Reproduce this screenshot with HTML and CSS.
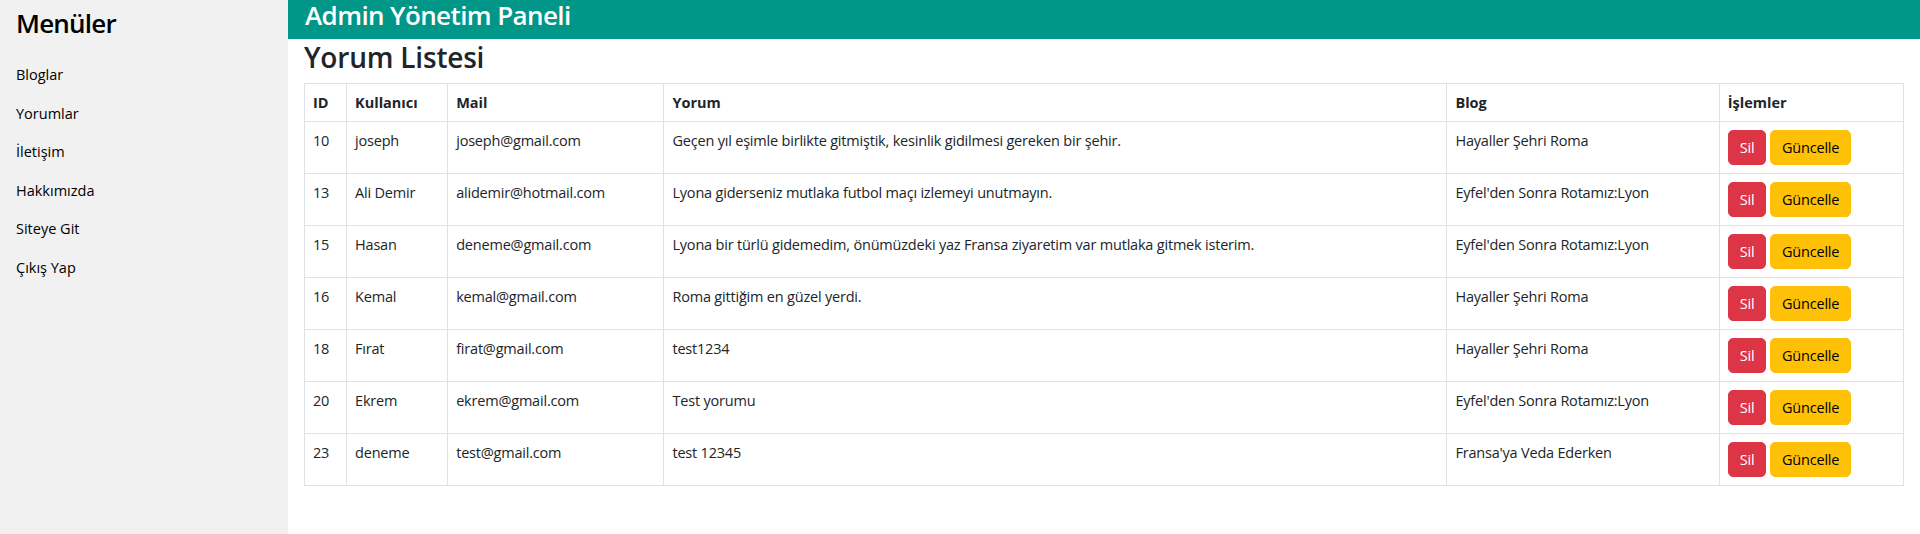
FILE: index.html
```html
<!DOCTYPE html>
<html lang="tr">
<head>
<meta charset="utf-8">
<title>Admin Yönetim Paneli</title>
<link rel="stylesheet" href="styles.css">
</head>
<body>
<div class="layout">
  <aside class="sidebar">
    <h3 class="sidebar-title">Menüler</h3>
    <nav class="menu">
      <a class="menu-item" href="#">Bloglar</a>
      <a class="menu-item" href="#">Yorumlar</a>
      <a class="menu-item" href="#">İletişim</a>
      <a class="menu-item" href="#">Hakkımızda</a>
      <a class="menu-item" href="#">Siteye Git</a>
      <a class="menu-item" href="#">Çıkış Yap</a>
    </nav>
  </aside>
  <main class="main">
    <header class="topbar">
      <h1 class="topbar-title">Admin Yönetim Paneli</h1>
    </header>
    <section class="content">
      <h2 class="page-title">Yorum Listesi</h2>
      <table class="data-table">
        <colgroup>
          <col class="c-id"><col class="c-user"><col class="c-mail"><col class="c-comment"><col class="c-blog"><col class="c-actions">
        </colgroup>
        <thead>
          <tr><th>ID</th><th>Kullanıcı</th><th>Mail</th><th>Yorum</th><th>Blog</th><th>İşlemler</th></tr>
        </thead>
        <tbody>
          <tr><td>10</td><td>joseph</td><td>joseph@gmail.com</td><td>Geçen yıl eşimle birlikte gitmiştik, kesinlik gidilmesi gereken bir şehir.</td><td>Hayaller Şehri Roma</td><td class="actions"><a class="btn btn-danger" href="#">Sil</a> <a class="btn btn-warning" href="#">Güncelle</a></td></tr>
          <tr><td>13</td><td>Ali Demir</td><td>alidemir@hotmail.com</td><td>Lyona giderseniz mutlaka futbol maçı izlemeyi unutmayın.</td><td>Eyfel'den Sonra Rotamız:Lyon</td><td class="actions"><a class="btn btn-danger" href="#">Sil</a> <a class="btn btn-warning" href="#">Güncelle</a></td></tr>
          <tr><td>15</td><td>Hasan</td><td>deneme@gmail.com</td><td>Lyona bir türlü gidemedim, önümüzdeki yaz Fransa ziyaretim var mutlaka gitmek isterim.</td><td>Eyfel'den Sonra Rotamız:Lyon</td><td class="actions"><a class="btn btn-danger" href="#">Sil</a> <a class="btn btn-warning" href="#">Güncelle</a></td></tr>
          <tr><td>16</td><td>Kemal</td><td>kemal@gmail.com</td><td>Roma gittiğim en güzel yerdi.</td><td>Hayaller Şehri Roma</td><td class="actions"><a class="btn btn-danger" href="#">Sil</a> <a class="btn btn-warning" href="#">Güncelle</a></td></tr>
          <tr><td>18</td><td>Fırat</td><td>firat@gmail.com</td><td>test1234</td><td>Hayaller Şehri Roma</td><td class="actions"><a class="btn btn-danger" href="#">Sil</a> <a class="btn btn-warning" href="#">Güncelle</a></td></tr>
          <tr><td>20</td><td>Ekrem</td><td>ekrem@gmail.com</td><td>Test yorumu</td><td>Eyfel'den Sonra Rotamız:Lyon</td><td class="actions"><a class="btn btn-danger" href="#">Sil</a> <a class="btn btn-warning" href="#">Güncelle</a></td></tr>
          <tr><td>23</td><td>deneme</td><td>test@gmail.com</td><td>test 12345</td><td>Fransa'ya Veda Ederken</td><td class="actions"><a class="btn btn-danger" href="#">Sil</a> <a class="btn btn-warning" href="#">Güncelle</a></td></tr>
        </tbody>
      </table>
    </section>
  </main>
</div>
</body>
</html>
```
FILE: styles.css
```css
html, body {
  margin: 0;
  padding: 0;
}
body {
  font-family: "Open Sans", "Noto Sans", sans-serif;
  font-size: 15px;
  color: #212529;
  background: #fff;
}
.layout {
  display: flex;
  min-height: 100vh;
}
.sidebar {
  width: 288px;
  flex: 0 0 288px;
  background: #f1f1f1;
}
.sidebar-title {
  margin: 0;
  padding: 8px 16px 17px;
  font-size: 26px;
  font-weight: 600;
  line-height: 31px;
  letter-spacing: -0.8px;
  color: #000;
}
.menu {
  display: flex;
  flex-direction: column;
}
.menu-item {
  display: block;
  padding: 8px 16px;
  line-height: 22.5px;
  font-size: 14.5px;
  color: #000;
  text-decoration: none;
}
.main {
  flex: 1;
  min-width: 0;
}
.topbar {
  background: #009688;
  color: #fff;
  padding: 0 17px 8px;
}
.topbar-title {
  margin: 0;
  font-size: 26px;
  font-weight: 600;
  line-height: 31px;
  letter-spacing: -0.6px;
}
.content {
  padding: 0 16px;
}
.page-title {
  margin: 0;
  padding-bottom: 8px;
  font-size: 28px;
  font-weight: 600;
  line-height: 36px;
  letter-spacing: -0.2px;
}
.data-table {
  width: 100%;
  border-collapse: collapse;
  table-layout: fixed;
  border: 1px solid #dee2e6;
}
.c-id { width: 42px; }
.c-user { width: 101px; }
.c-mail { width: 216px; }
.c-comment { width: 782px; }
.c-blog { width: 272px; }
.c-actions { width: 184px; }
.data-table th,
.data-table td {
  border: 1px solid #dee2e6;
  padding: 8px;
  text-align: left;
  vertical-align: top;
  white-space: nowrap;
  overflow: hidden;
}
.data-table th {
  font-weight: 700;
  line-height: 21px;
  font-size: 14.5px;
}
.data-table td {
  line-height: 22px;
  font-size: 14.5px;
  letter-spacing: -0.2px;
}
.btn {
  display: inline-block;
  padding: 6px 11px;
  line-height: 21px;
  font-size: 14.5px;
  border: 1px solid transparent;
  border-radius: 5px;
  text-decoration: none;
  vertical-align: top;
}
.btn-danger {
  background: #dc3545;
  border-color: #dc3545;
  color: #fff;
}
.btn-warning {
  background: #ffc107;
  border-color: #ffc107;
  color: #000;
}
```
